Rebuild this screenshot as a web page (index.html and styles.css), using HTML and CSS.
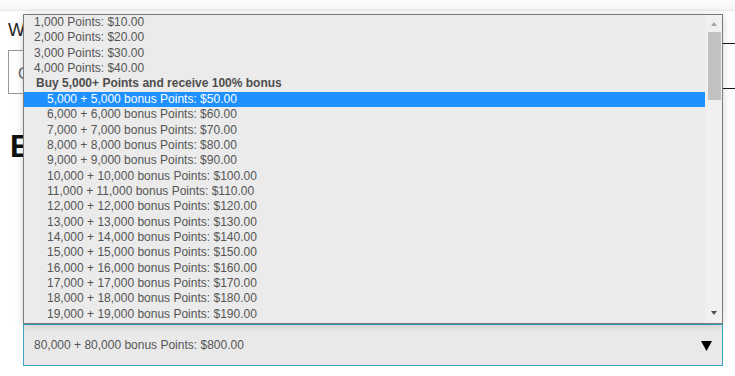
FILE: index.html
```html
<!DOCTYPE html>
<html lang="en">
<head>
    <meta charset="UTF-8">
    <meta name="viewport" content="width=device-width, initial-scale=1.0">
    <title>Buy Points</title>
    <link rel="stylesheet" href="styles.css">
</head>
<body>
    <div class="topbar"></div>
    <div class="page">
        <div class="greeting">Welcome back</div>
        <div class="search-row">
            <div class="code-box">Code</div>
            <div class="side-box">Apply</div>
        </div>
        <h1 class="title">Earn Points</h1>

        <div class="points-select">
            <span class="points-value">80,000 + 80,000 bonus Points: $800.00</span>
            <svg class="points-arrow" width="11" height="10" viewBox="0 0 11 10"><polygon points="0,0 11,0 5.5,10" fill="#000"/></svg>
        </div>
    </div>

    <!-- open dropdown list of the select -->
    <div class="listbox">
        <div class="options">
            <div class="opt">1,000 Points: $10.00</div>
            <div class="opt">2,000 Points: $20.00</div>
            <div class="opt">3,000 Points: $30.00</div>
            <div class="opt">4,000 Points: $40.00</div>
            <div class="group-label">Buy 5,000+ Points and receive 100% bonus</div>
            <div class="opt in-group selected">5,000 + 5,000 bonus Points: $50.00</div>
            <div class="opt in-group">6,000 + 6,000 bonus Points: $60.00</div>
            <div class="opt in-group">7,000 + 7,000 bonus Points: $70.00</div>
            <div class="opt in-group">8,000 + 8,000 bonus Points: $80.00</div>
            <div class="opt in-group">9,000 + 9,000 bonus Points: $90.00</div>
            <div class="opt in-group">10,000 + 10,000 bonus Points: $100.00</div>
            <div class="opt in-group">11,000 + 11,000 bonus Points: $110.00</div>
            <div class="opt in-group">12,000 + 12,000 bonus Points: $120.00</div>
            <div class="opt in-group">13,000 + 13,000 bonus Points: $130.00</div>
            <div class="opt in-group">14,000 + 14,000 bonus Points: $140.00</div>
            <div class="opt in-group">15,000 + 15,000 bonus Points: $150.00</div>
            <div class="opt in-group">16,000 + 16,000 bonus Points: $160.00</div>
            <div class="opt in-group">17,000 + 17,000 bonus Points: $170.00</div>
            <div class="opt in-group">18,000 + 18,000 bonus Points: $180.00</div>
            <div class="opt in-group">19,000 + 19,000 bonus Points: $190.00</div>
        </div>
        <div class="scrollbar">
            <div class="arrow-up"></div>
            <div class="thumb"></div>
            <div class="track-fill"></div>
            <div class="arrow-down"></div>
        </div>
    </div>
</body>
</html>
```

FILE: styles.css
```css
body {
    margin: 0;
    font-family: "Liberation Sans", Arial, sans-serif;
    background: #fff;
    color: #222;
    overflow: hidden;
}

.topbar {
    height: 10px;
    background: linear-gradient(#fdfdfd, #f4f4f4);
    border-bottom: 1px solid #e9e9e9;
}

.page {
    padding-left: 8px;
}

.greeting {
    margin-top: 9px;
    margin-bottom: 3px;
    font-size: 18px;
    line-height: 20px;
    color: #222;
}

.search-row {
    display: flex;
    align-items: flex-start;
}

.code-box {
    flex: 1;
    margin-top: 7px;
    height: 44px;
    box-sizing: border-box;
    border: 1px solid #9a9a9a;
    padding: 4px 9px 0;
    font-size: 16px;
    line-height: 38px;
    color: #666;
}

.side-box {
    width: 160px;
    height: 46px;
    box-sizing: border-box;
    border-top: 1px solid #1a1a1a;
    border-bottom: 1px solid #1a1a1a;
    line-height: 44px;
    text-align: center;
    color: #222;
}

.title {
    margin: 35px 0 0 2px;
    font-size: 31px;
    line-height: 36px;
    font-weight: bold;
    color: #111;
}

.points-select {
    margin: 159px 0 0 15px;
    width: 700px;
    height: 42px;
    box-sizing: border-box;
    border: 1px solid #38a8c6;
    background: #e9e9e9;
    display: flex;
    align-items: center;
    justify-content: space-between;
    padding: 0 10px 0 10px;
}

.points-value {
    font-size: 12px;
    color: #555;
}

.points-arrow {
    display: block;
    margin-top: 1px;
}

.listbox {
    position: absolute;
    left: 23px;
    top: 14px;
    width: 700px;
    height: 310px;
    box-sizing: border-box;
    border: 1px solid #7c7c7c;
    background: #ebebeb;
    box-shadow: 0 1px 8px rgba(0, 0, 0, 0.18);
    display: flex;
    overflow: hidden;
}

.options {
    flex: 1;
    overflow: hidden;
}

.opt, .group-label {
    height: 15.37px;
    line-height: 15.37px;
    font-size: 12px;
    color: #555;
    white-space: nowrap;
    padding-left: 10px;
}

.group-label {
    font-weight: bold;
    padding-left: 12px;
    color: #4e4e4e;
}

.opt.in-group {
    padding-left: 23px;
}

.opt.selected {
    background: #1e90ff;
    color: #fff;
}

.scrollbar {
    width: 17px;
    background: #f0f0f0;
    display: flex;
    flex-direction: column;
    align-items: center;
}

.arrow-up {
    margin-top: 7px;
    width: 0;
    height: 0;
    border-left: 3.5px solid transparent;
    border-right: 3.5px solid transparent;
    border-bottom: 4px solid #a3a3a3;
}

.thumb {
    margin-top: 6px;
    margin-left: 1px;
    width: 13px;
    height: 68px;
    background: #c1c1c1;
}

.track-fill {
    flex: 1;
}

.arrow-down {
    margin-bottom: 8px;
    width: 0;
    height: 0;
    border-left: 3.5px solid transparent;
    border-right: 3.5px solid transparent;
    border-top: 4px solid #505050;
}
```
